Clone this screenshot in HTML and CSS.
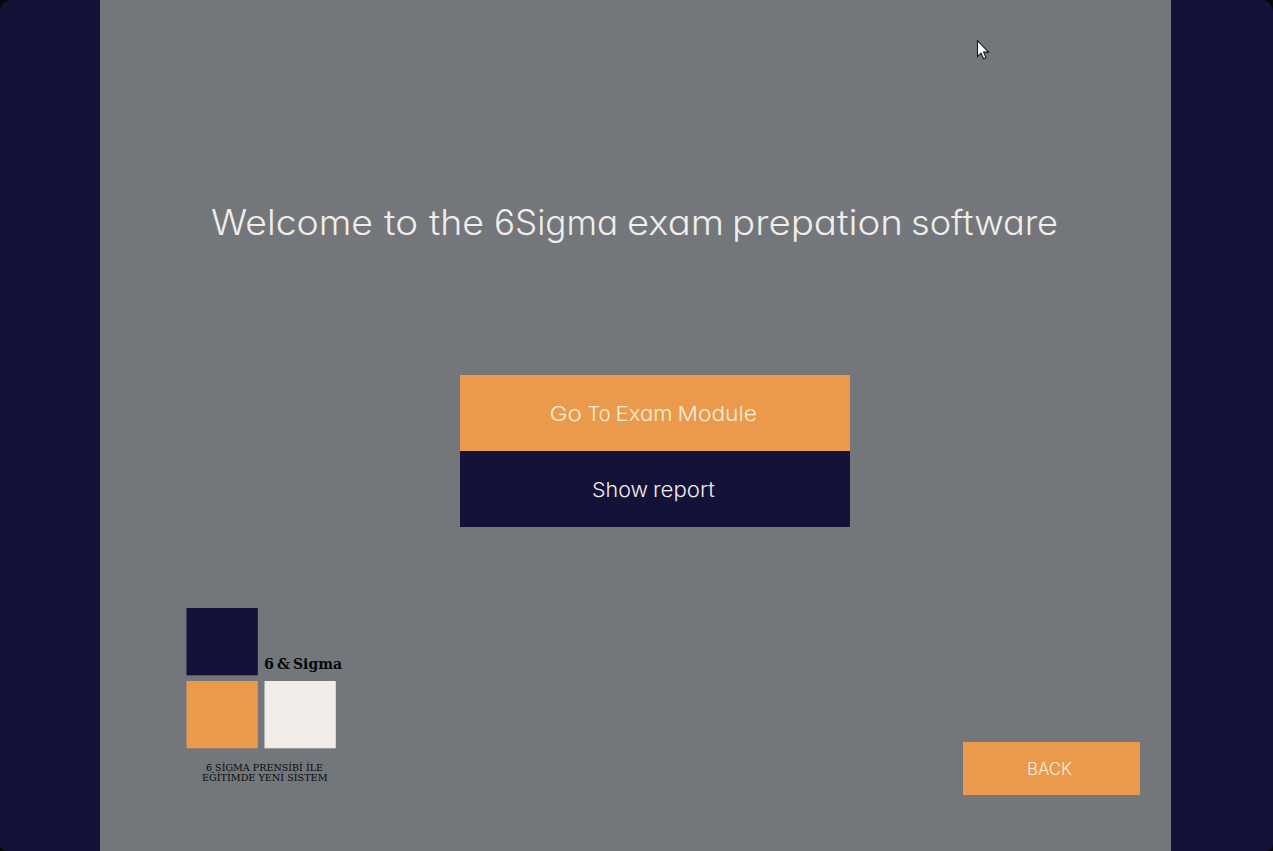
FILE: index.html
```html
<!DOCTYPE html>
<html lang="en">
<head>
<meta charset="utf-8">
<title>6 &amp; Sigma</title>
<link rel="stylesheet" href="styles.css">
</head>
<body>
<div class="window">
  <main class="panel">
    <h1 class="welcome">
      <svg width="860" height="50" viewBox="205 200 860 50">
        <text y="235"><tspan x="211" textLength="162" lengthAdjust="spacingAndGlyphs">Welcome</tspan> <tspan x="384" textLength="34" lengthAdjust="spacingAndGlyphs">to</tspan> <tspan x="429" textLength="55" lengthAdjust="spacingAndGlyphs">the</tspan> <tspan x="494" textLength="124" lengthAdjust="spacingAndGlyphs">6Sigma</tspan> <tspan x="627" textLength="97" lengthAdjust="spacingAndGlyphs">exam</tspan> <tspan x="732" textLength="171" lengthAdjust="spacingAndGlyphs">prepation</tspan> <tspan x="911" textLength="147" lengthAdjust="spacingAndGlyphs">software</tspan></text>
      </svg>
    </h1>
    <nav class="menu">
      <button class="item exam"><svg width="390" height="76" viewBox="460 375 390 76"><text y="421"><tspan x="549.5" textLength="32.5" lengthAdjust="spacingAndGlyphs">Go</tspan> <tspan x="587.5" textLength="23" lengthAdjust="spacingAndGlyphs">To</tspan> <tspan x="615.5" textLength="57" lengthAdjust="spacingAndGlyphs">Exam</tspan> <tspan x="677.5" textLength="79.5" lengthAdjust="spacingAndGlyphs">Module</tspan></text></svg></button>
      <button class="item report"><svg width="390" height="76" viewBox="460 451 390 76"><text y="497"><tspan x="592" textLength="56" lengthAdjust="spacingAndGlyphs">Show</tspan> <tspan x="653" textLength="62" lengthAdjust="spacingAndGlyphs">report</tspan></text></svg></button>
    </nav>
    <footer class="foot">
      <svg class="logo" width="170" height="190" viewBox="180 602 170 190">
        <rect class="navy" x="186.5" y="608" width="71.3" height="67.3"/>
        <rect class="orange" x="186.5" y="681" width="71.3" height="67.3"/>
        <rect class="cream" x="264.5" y="681" width="71.3" height="67.3"/>
        <text class="brand" y="669"><tspan x="264" textLength="10" lengthAdjust="spacingAndGlyphs">6</tspan> <tspan x="277" textLength="13" lengthAdjust="spacingAndGlyphs">&amp;</tspan> <tspan x="293" textLength="49" lengthAdjust="spacingAndGlyphs">Sigma</tspan></text>
        <text class="motto" x="206" y="771" textLength="117" lengthAdjust="spacingAndGlyphs">6 SİGMA PRENSİBİ İLE</text>
        <text class="motto" x="202" y="781.3" textLength="125.5" lengthAdjust="spacingAndGlyphs">EĞİTİMDE YENİ SİSTEM</text>
      </svg>
      <button class="back"><svg width="177" height="53" viewBox="963 742 177 53"><text x="1027" y="775" textLength="45" lengthAdjust="spacingAndGlyphs">BACK</text></svg></button>
    </footer>
  </main>
  <svg class="cursor" width="14" height="22" viewBox="0 0 14 22"><path d="M1.5 1.5v16l3.6-3.4 2.4 5.6 2.5-1-2.4-5.6h5z"/></svg>
</div>
</body>
</html>
```
FILE: styles.css
```css
body {
  margin: 0;
  background: #080808;
  overflow: hidden;
}
.window {
  position: relative;
  width: 1273px;
  height: 851px;
  box-sizing: border-box;
  padding: 0 102px 0 100px;
  background: #15123a;
  border-radius: 12px 12px 7px 7px;
}
.panel {
  height: 851px;
  box-sizing: border-box;
  padding-top: 200px;
  display: flex;
  flex-direction: column;
  background: #73777b;
}
svg {
  display: block;
  overflow: visible;
}
text {
  font-family: "Century Gothic", Inter, Lato, sans-serif;
  font-weight: 300;
  font-feature-settings: "cv11" 1, "liga" 0;
}
.welcome {
  margin: 0 0 0 105px;
  height: 50px;
  font-size: 35px;
}
.welcome text {
  fill: #f1eeea;
}
.menu {
  width: 390px;
  margin: 125px 0 0 360px;
}
button {
  display: block;
  border: 0;
  padding: 0;
}
.item {
  width: 390px;
  height: 76px;
  font-size: 20.5px;
}
.exam, .back {
  background: #eb994b;
}
.exam text, .back text {
  fill: #fbeedd;
}
.report {
  background: #15123a;
}
.report text {
  fill: #f1eeea;
}
.foot {
  display: flex;
  justify-content: space-between;
  align-items: flex-start;
  margin: 75px 31px 0 80px;
}
.back {
  width: 177px;
  height: 53px;
  margin-top: 140px;
  font-size: 17px;
}
.navy {
  fill: #15123a;
}
.orange {
  fill: #eb994b;
}
.cream {
  fill: #f0ede8;
}
.brand {
  font: bold 15.5px "DejaVu Serif", serif;
  fill: #070809;
}
.motto {
  font: 9px "DejaVu Serif", serif;
  fill: #08090a;
}
.cursor {
  position: absolute;
  left: 976px;
  top: 39px;
}
.cursor path {
  fill: #fff;
  stroke: #17171c;
  stroke-width: 1.1;
}
```
